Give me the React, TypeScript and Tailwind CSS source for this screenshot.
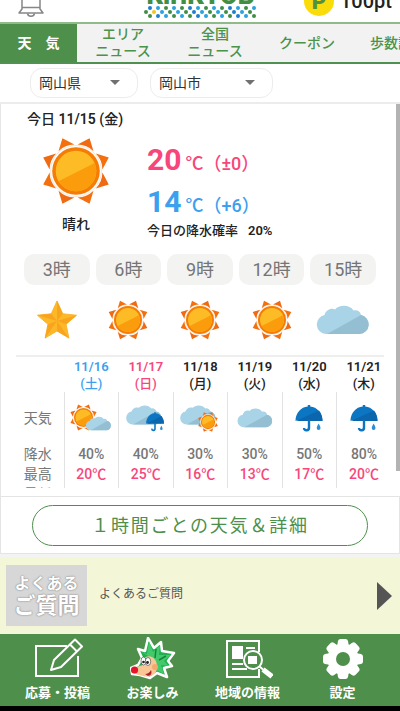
import React, { useState } from 'react';
import clsx from 'clsx';

type Weather =
  | 'sun'
  | 'star'
  | 'cloud'
  | 'rain'
  | 'sunCloud'
  | 'cloudRain'
  | 'cloudSun';

type Day = {
  date: string;
  weekday: string;
  color: string;
  weather: Weather;
  rain: string;
  high: string;
};

const tabs = [
  { lines: ['エリア', 'ニュース'], width: 'w-[92px]' },
  { lines: ['全国', 'ニュース'], width: 'w-[92px]' },
  { lines: ['クーポン'], width: 'w-[92px]' },
  { lines: ['歩数計'], width: 'w-[76px]' },
];

const hours: { label: string; weather: Weather }[] = [
  { label: '3時', weather: 'star' },
  { label: '6時', weather: 'sun' },
  { label: '9時', weather: 'sun' },
  { label: '12時', weather: 'sun' },
  { label: '15時', weather: 'cloud' },
];

const days: Day[] = [
  { date: '11/16', weekday: '(土)', color: 'text-[#3d9fee]', weather: 'sunCloud', rain: '40%', high: '20℃' },
  { date: '11/17', weekday: '(日)', color: 'text-[#f8467c]', weather: 'cloudRain', rain: '40%', high: '25℃' },
  { date: '11/18', weekday: '(月)', color: 'text-[#222]', weather: 'cloudSun', rain: '30%', high: '16℃' },
  { date: '11/19', weekday: '(火)', color: 'text-[#222]', weather: 'cloud', rain: '30%', high: '13℃' },
  { date: '11/20', weekday: '(水)', color: 'text-[#222]', weather: 'rain', rain: '50%', high: '17℃' },
  { date: '11/21', weekday: '(木)', color: 'text-[#222]', weather: 'rain', rain: '80%', high: '20℃' },
];

// The shapes are drawn around 0,0 so that they can be combined
const SunShape = () => (
  <g>
    {[0, 1, 2, 3, 4, 5, 6, 7].map((i) => (
      <path
        key={i}
        d="M0 -35.5L8.6 -25Q0 -28.5 -8.6 -25Z"
        fill={i % 2 ? '#f4700f' : '#ef6a12'}
        transform={`rotate(${22.5 + i * 45})`}
      />
    ))}
    <circle r="25.5" fill="#fff" stroke="#f6dfd2" strokeWidth="0.8" />
    <circle r="23.8" fill="#f57c05" />
    <circle r="20.3" fill="#fdbc26" />
    <path d="M-17.5 10.3A20.3 20.3 0 0 0 18.6 -8.1Z" fill="#fb9c0d" />
  </g>
);

const CloudShape = () => (
  <g>
    <path
      d="M-17 14A9.6 9.6 0 0 1 -18.5 -5C-17 -10 -12 -12.5 -8 -10.5C-4 -15.5 7 -15.5 10.5 -9.5C14 -10.5 17.5 -8.5 18 -5A9.6 9.6 0 0 1 16.5 14Z"
      fill="#a9d3e6"
    />
    <path d="M-16 14L18 -5A9.6 9.6 0 0 1 16.5 14Z" fill="#94bfd3" />
  </g>
);

const UmbrellaShape = () => (
  <g>
    <path
      d="M-13.5 3C-13.5 -5 -8 -11 -1.2 -11.5V-13H1.2V-11.5C8 -11 13.5 -5 13.5 3Q10.5 1 8.5 3Q4.500 1 0 3Q-4.5 1 -8.5 3Q-10.5 1 -13.5 3Z"
      fill="#0d76c2"
    />
    <path d="M-13 3L10 -7.5Q13.5 -3 13.5 3Z" fill="#0b66ae" />
    <path
      d="M0 2V9.5A2.5 2.5 0 0 1 -5 10"
      fill="none"
      stroke="#0d76c2"
      strokeWidth="2.4"
    />
    <path d="M9.5 5.5C11 8 11.5 9 11.5 10A1.9 1.9 0 0 1 7.7 10C7.7 9 8.5 8 9.5 5.5Z" fill="#2a8fd4" />
  </g>
);

const viewBoxes: Record<Weather, string> = {
  sun: '-34 -34 68 68',
  star: '-21 -21 42 42',
  rain: '-14 -14 28 28',
  cloud: '-27 -15 54 30',
  sunCloud: '-21 -14 42 28',
  cloudRain: '-21 -14 42 28',
  cloudSun: '-21 -14 42 28',
};

const WeatherIcon: React.FC<{
  type: Weather;
  label: string;
  className?: string;
}> = ({ type, label, className }) => (
  <svg viewBox={viewBoxes[type]} className={className} role="img" aria-label={label}>
    {type === 'sun' && <SunShape />}
    {type === 'star' && (
      <g>
        <path
          d="M0 -20L6 -6.5L20.5 -5L9.5 4.5L12.5 19L0 11.5L-12.5 19L-9.5 4.5L-20.5 -5L-6 -6.5Z"
          fill="#fdb827"
          stroke="#fbb22c"
          strokeWidth="1"
          strokeLinejoin="round"
        />
        <path
          d="M0 -20L0 1L6 -6.5ZM20.5 -5L0 1L9.5 4.5ZM12.5 19L0 1L0 11.5ZM-12.5 19L0 1L-9.5 4.5ZM-20.5 -5L0 1L-6 -6.5Z"
          fill="#f9a41f"
        />
      </g>
    )}
    {type === 'cloud' && <CloudShape />}
    {type === 'rain' && <UmbrellaShape />}
    {type === 'sunCloud' && (
      <g>
        <g transform="translate(-7.5 -0.5) scale(0.4)">
          <SunShape />
        </g>
        <g transform="translate(7.5 5.5) scale(0.48)">
          <CloudShape />
        </g>
      </g>
    )}
    {type === 'cloudRain' && (
      <g>
        <g transform="translate(-2 -3) scale(0.68)">
          <CloudShape />
        </g>
        <g transform="translate(9 3.5) scale(0.66 0.72)">
          <UmbrellaShape />
        </g>
      </g>
    )}
    {type === 'cloudSun' && (
      <g>
        <g transform="translate(-2 -3) scale(0.68)">
          <CloudShape />
        </g>
        <g transform="translate(8 4) scale(0.3)">
          <SunShape />
        </g>
      </g>
    )}
  </svg>
);

const dotColors = ['#3f8f45', '#27a3e0', '#3f8f45', '#1d7fd0', '#27a3e0'];

const LogoDots = () => (
  <svg viewBox="0 0 112 12" className="h-3 w-28" aria-hidden="true">
    {[0, 1, 2].map((row) =>
      Array.from({ length: 28 }, (_, col) =>
        (row + col) % 2 === 1 ? (
          <circle
            key={`${row}-${col}`}
            cx={2 + col * 4}
            cy={2 + row * 4}
            r="2"
            fill={
              row === 1 && col === 2
                ? '#f5c518'
                : dotColors[(row * 2 + col * 3) % dotColors.length]
            }
          />
        ) : null
      )
    )}
  </svg>
);

const Header = () => (
  <header className="flex h-[22px] items-end justify-between overflow-hidden bg-white pl-[18px] pr-2">
    <button type="button" aria-label="お知らせ" className="mb-[5px] w-[79px]">
      <svg
        viewBox="0 0 26 32"
        className="h-8 w-[26px]"
        fill="none"
        stroke="#868686"
        strokeWidth="1.5"
      >
        <path d="M4 24V12A9 9 0 0 1 22 12V24L25 28H1Z" strokeLinejoin="round" />
        <path d="M4 22.5H22" />
        <path d="M9.5 28.5A3.6 3.6 0 0 0 16.5 28.5" />
      </svg>
    </button>
    <div className="mb-1 flex flex-col items-center">
      <span className="whitespace-nowrap text-[26px] leading-[22px] font-black text-[#3f8f45]">
        KiriKYOB
      </span>
      <LogoDots />
    </div>
    <div className="mb-[6px] flex items-center gap-[6px]">
      <span className="flex size-[30px] items-center justify-center rounded-full bg-[#fbdc0b] text-[22px] font-black text-[#4f9247]">
        P
      </span>
      <span className="text-xl font-medium text-[#222]">100pt</span>
    </div>
  </header>
);

const TabBar = () => (
  <nav className="flex h-[42px] overflow-hidden border-t-2 border-b-2 border-t-[#8fba8a] border-b-[#4f9150] bg-[#f2f2f2] text-sm leading-[17px] font-medium text-[#4b924b]">
    <a
      href="#weather"
      className="flex w-[77px] shrink-0 items-center justify-center bg-[#4e8f4b] font-bold text-white"
    >
      天　気
    </a>
    {tabs.map((tab) => (
      <a
        key={tab.lines.join('')}
        href="#news"
        className={clsx(
          'flex shrink-0 flex-col items-center justify-center',
          tab.width
        )}
      >
        {tab.lines.map((line) => (
          <span key={line}>{line}</span>
        ))}
      </a>
    ))}
  </nav>
);

const AreaSelect: React.FC<{
  label: string;
  options: string[];
  className: string;
}> = ({ label, options, className }) => {
  const [value, setValue] = useState(options[0]);
  return (
    <div className={clsx('relative', className)}>
      <select
        aria-label={label}
        value={value}
        onChange={(e) => setValue(e.target.value)}
        className="h-[30px] w-full appearance-none rounded-[12px] border border-[#ececec] bg-white pl-2 text-sm text-[#333]"
      >
        {options.map((option) => (
          <option key={option}>{option}</option>
        ))}
      </select>
      <svg
        viewBox="0 0 10 5"
        className="pointer-events-none absolute top-3 right-[18px] h-[5px] w-[10px]"
        fill="#707070"
      >
        <path d="M0 0H10L5 5Z" />
      </svg>
    </div>
  );
};

const Today = () => (
  <section className="px-[26px] pt-[6px]">
    <h2 className="text-sm leading-[18px] font-medium text-[#222]">
      今日 <span className="font-semibold">11/15</span> (金)
    </h2>
    <div className="flex gap-[22px] pt-[9px]">
      <div className="flex w-[98px] flex-col items-center">
        <WeatherIcon type="sun" label="晴れ" className="size-[68px]" />
        <p className="pt-[9px] text-sm leading-5 font-medium text-[#222]">晴れ</p>
      </div>
      <div className="whitespace-nowrap">
        <p className="flex h-[42px] items-baseline pt-[3px] text-lg font-medium text-[#f8467c]">
          <span className="mr-1 text-[30px] leading-10 font-bold">20</span>
          ℃<span>（±0）</span>
        </p>
        <p className="flex h-[42px] items-baseline pt-[3px] text-lg font-medium text-[#3d9fee]">
          <span className="mr-1 text-[30px] leading-10 font-bold">14</span>
          ℃<span>（+6）</span>
        </p>
        <p className="text-[13px] leading-5 font-medium text-[#222]">
          今日の降水確率<span className="ml-[10px] font-semibold">20%</span>
        </p>
      </div>
    </div>
  </section>
);

const Hourly = () => (
  <ul className="grid grid-cols-5 gap-[6px] pt-[13px] pr-6 pl-[23px]">
    {hours.map((hour) => (
      <li key={hour.label} className="flex flex-col items-center">
        <span className="flex h-[31px] w-full items-center justify-center rounded-[10px] bg-[#f3f3f1] text-lg text-[#757575]">
          {hour.label}
        </span>
        <span className="flex h-[70px] items-center">
          <WeatherIcon
            type={hour.weather}
            label={hour.label}
            className={hour.weather === 'cloud' ? 'h-[30px] w-[54px]' : 'size-10'}
          />
        </span>
      </li>
    ))}
  </ul>
);

const cell = 'border-l border-[#e2e2e2] p-0';

const Weekly = () => (
  <div className="pr-[9px] pl-[15px]">
    <hr className="mr-[7px] border-t-2 border-[#eeeeec]" />
    <table className="w-full table-fixed border-collapse text-center text-sm leading-5 text-[#777]">
      <thead>
        <tr className="h-[35px] text-[13px] leading-[17px]">
          <td className="w-12" />
          {days.map((day) => (
            <th key={day.date} scope="col" className={clsx('p-0 font-medium', day.color)}>
              <span className="block font-semibold">{day.date}</span>
              {day.weekday}
            </th>
          ))}
        </tr>
      </thead>
      <tbody>
        <tr className="h-[52px]">
          <th scope="row" className="p-0 pr-1 font-normal">天気</th>
          {days.map((day) => (
            <td key={day.date} className={cell}>
              <WeatherIcon
                type={day.weather}
                label={day.date}
                className={clsx(
                  'mx-auto',
                  day.weather === 'cloud' && 'h-5 w-9',
                  day.weather === 'rain' && 'size-7',
                  day.weather !== 'cloud' && day.weather !== 'rain' && 'h-7 w-[42px]'
                )}
              />
            </td>
          ))}
        </tr>
        <tr>
          <th scope="row" className="p-0 pr-1 font-normal">降水</th>
          {days.map((day) => (
            <td key={day.date} className={clsx(cell, 'font-medium')}>
              {day.rain}
            </td>
          ))}
        </tr>
        <tr>
          <th scope="row" className="p-0 pr-1 font-normal">最高</th>
          {days.map((day) => (
            <td key={day.date} className={clsx(cell, 'font-medium text-[#f8467c]')}>
              {day.high}
            </td>
          ))}
        </tr>
        <tr>
          <th scope="row" className="p-0 pr-1 font-normal">最低</th>
          {days.map((day) => (
            <td key={day.date} className={cell} />
          ))}
        </tr>
      </tbody>
    </table>
  </div>
);

const PencilIcon = () => (
  <svg viewBox="0 0 50 44" className="h-11 w-[50px]" fill="none" stroke="#fff" strokeWidth="2">
    <path d="M34 9H3V39H45V19" />
    <path d="M18 33L21 23L42 2.5L49 9.5L28 30Z" strokeLinejoin="round" />
    <path d="M37 7.5L44 14.5" />
  </svg>
);

const HedgehogIcon = () => (
  <svg viewBox="0 0 46 44" className="h-11 w-[46px]">
    <path
      d="M12 21L8 12L15 14L18 1L24 11L31 5L32 14L44 16L38 24L42 29L34 31L37 40L27 36L20 41L10 38L2 37L1 31L8 28Z"
      fill="#1fb050"
      stroke="#fff"
      strokeWidth="2.5"
      strokeLinejoin="round"
    />
    <path d="M19 4L23 15L30 8L29 18L41 18L34 24L39 29L31 28L34 37L26 33L20 20L11 15L17 17Z" fill="#42c96b" />
    <path d="M26 12L25 21M36 19L29 23" stroke="#14853a" strokeWidth="1.5" />
    <path d="M13 22C18 16 27 20 27 29C28 37 20 41 13 39C8 38 5 37 3 36C3 32 8 29 13 28Z" fill="#f9c795" />
    <circle cx="25" cy="30" r="3" fill="#f2a96f" />
    <ellipse cx="13.5" cy="24" rx="2.5" ry="4" fill="#fff" stroke="#333" strokeWidth="0.6" />
    <ellipse cx="18" cy="24.5" rx="2.7" ry="4" fill="#fff" stroke="#333" strokeWidth="0.6" />
    <circle cx="13.5" cy="25" r="1.3" fill="#222" />
    <circle cx="17.5" cy="25.5" r="1.4" fill="#222" />
    <circle cx="4.5" cy="33" r="3.6" fill="#e5152b" />
    <path d="M15 37Q19 37 21 33Q23 38 18 39Z" fill="#b81f2c" />
  </svg>
);

const LocalNewsIcon = () => (
  <svg viewBox="0 0 50 44" className="h-11 w-[50px]" fill="none" stroke="#fff" strokeWidth="2">
    <path d="M36 15V4H4V40H36V32" />
    <path d="M9 9H20V22H9Z" fill="#fff" stroke="none" />
    <path d="M23 11H32M9 27H20M9 32H24" />
    <circle cx="30" cy="23" r="9" />
    <path d="M25 19H34V27H25Z" fill="#fff" stroke="none" />
    <path d="M36 29L40 32.5" />
    <path d="M40 32.5L49 39.5" strokeWidth="5" />
  </svg>
);

const GearIcon = () => (
  <svg viewBox="-22 -22 44 44" className="size-11" fill="#fff">
    {[0, 1, 2, 3, 4, 5, 6, 7].map((i) => (
      <path
        key={i}
        d="M-6 -12L-5 -18Q-4.500 -20 -2.500 -20H2.500Q4.500 -20 5 -18L6 -12Z"
        transform={`rotate(${i * 45})`}
      />
    ))}
    <circle r="15.5" />
    <circle r="7" fill="#4e8f4b" />
  </svg>
);

const navItems = [
  { label: '応募・投稿', icon: <PencilIcon /> },
  { label: 'お楽しみ', icon: <HedgehogIcon /> },
  { label: '地域の情報', icon: <LocalNewsIcon /> },
  { label: '設定', icon: <GearIcon /> },
];

const App: React.FC = () => {
  return (
    <div className="bg-white font-['Roboto','Noto_Sans_CJK_JP',sans-serif]">
      <Header />
      <TabBar />
      <main>
        <div className="flex gap-3 border-b-2 border-[#ececec] pt-1 pb-1 pl-[30px]">
          <AreaSelect label="都道府県" options={['岡山県', '香川県']} className="w-[108px]" />
          <AreaSelect label="市町村" options={['岡山市', '倉敷市']} className="w-[123px]" />
        </div>
        <div className="relative border-l border-[#e6e6e6] pb-[8px]">
          <div className="max-h-[384px] overflow-hidden">
            <Today />
            <Hourly />
            <Weekly />
          </div>
          <div className="absolute top-0 right-0 h-[367px] w-1 bg-[#b3b3b3]" />
        </div>
        <div className="border border-[#e4e4e4] px-[31px] pt-2 pb-[7px]">
          <button
            type="button"
            className="h-[41px] w-full rounded-full border border-[#4e8f4b] text-lg tracking-widest text-[#4e8f4b]"
          >
            １時間ごとの天気＆詳細
          </button>
        </div>
        <a
          href="#faq"
          className="flex h-[80px] items-center border-t-[3px] border-[#f3f3f3] bg-[#f4f6d8] pr-2 pl-[6px]"
        >
          <span className="flex h-[61px] w-[81px] flex-col items-center justify-center bg-[#d7d7d7] font-bold text-white [text-shadow:0_0_1px_#888,0_0_2px_#888]">
            <span className="text-base leading-5">よくある</span>
            <span className="text-[22px] leading-6">ご質問</span>
          </span>
          <span className="flex-1 pb-1 pl-3 text-xs text-[#555]">よくあるご質問</span>
          <svg viewBox="0 0 15 28" className="h-7 w-[15px]" fill="#555">
            <path d="M0 0L15 14L0 28Z" />
          </svg>
        </a>
      </main>
      <nav className="grid h-[77px] grid-cols-4 border-b-[5px] border-black bg-[#4e8f4b] px-[10px] pt-[3px]">
        {navItems.map((item) => (
          <a
            key={item.label}
            href="#menu"
            className="flex flex-col items-center text-[13px] leading-5 font-bold text-white"
          >
            {item.icon}
            <span className="pt-[2px]">{item.label}</span>
          </a>
        ))}
      </nav>
    </div>
  );
};

export default App;
